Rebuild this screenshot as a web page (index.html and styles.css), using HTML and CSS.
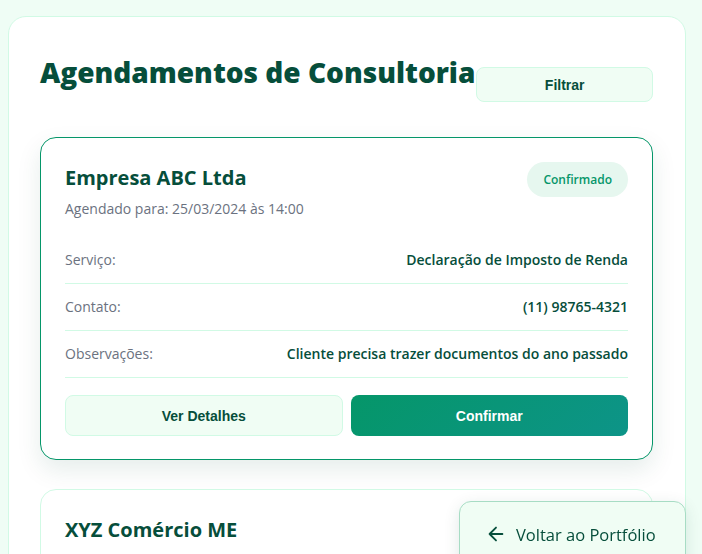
FILE: index.html
```html
<!DOCTYPE html>
<html lang="pt-BR">
<head>
<meta charset="utf-8">
<title>Agendamentos de Consultoria</title>
<link rel="stylesheet" href="styles.css">
</head>
<body>
<main class="panel">
  <header class="panel-head">
    <h1 class="panel-title">Agendamentos de Consultoria</h1>
    <button class="btn-filter">Filtrar</button>
  </header>

  <section class="appt appt--active">
    <div class="appt-top">
      <div>
        <h2 class="appt-name">Empresa ABC Ltda</h2>
        <p class="appt-date">Agendado para: 25/03/2024 às 14:00</p>
      </div>
      <span class="badge">Confirmado</span>
    </div>
    <div class="rows">
      <div class="row"><span class="row-label">Serviço:</span><span class="row-value">Declaração de Imposto de Renda</span></div>
      <div class="row"><span class="row-label">Contato:</span><span class="row-value">(11) 98765-4321</span></div>
      <div class="row"><span class="row-label">Observações:</span><span class="row-value">Cliente precisa trazer documentos do ano passado</span></div>
    </div>
    <div class="actions">
      <button class="btn btn-light">Ver Detalhes</button>
      <button class="btn btn-primary">Confirmar</button>
    </div>
  </section>

  <section class="appt">
    <div class="appt-top">
      <div>
        <h2 class="appt-name">XYZ Comércio ME</h2>
        <p class="appt-date">Agendado para: 26/03/2024 às 10:00</p>
      </div>
    </div>
  </section>
</main>

<a class="back-btn" href="#">
  <svg class="back-icon" viewBox="0 0 24 24" width="22" height="22" aria-hidden="true"><path d="M19 12H5M12 19l-7-7 7-7" fill="none" stroke="currentColor" stroke-width="2" stroke-linecap="round" stroke-linejoin="round"/></svg>
  <span>Voltar ao Portfólio</span>
</a>
</body>
</html>
```
FILE: styles.css
```css
* { box-sizing: border-box; }
html, body { margin: 0; }
body {
  background: #effdf5;
  font-family: "Open Sans", "Noto Sans", sans-serif;
  color: #064e3b;
  padding: 16px 16px 0 8px;
  overflow: hidden;
  height: 554px;
}
.panel {
  width: 678px;
  background: #fff;
  border: 1px solid #d1fae5;
  border-radius: 18px;
  padding: 32px 32px 0 31px;
  min-height: 700px;
}
.panel-head {
  display: flex;
  align-items: flex-start;
  margin-bottom: 35px;
  padding-top: 7px;
}
.panel-title {
  margin: 0;
  font-size: 28px;
  font-weight: 800;
  color: #064e3b;
  line-height: 1.2;
  white-space: nowrap;
}
.btn-filter {
  margin-left: 1px;
  margin-top: 11px;
  flex: 1;
  height: 35px;
  background: #f0fdf4;
  border: 1px solid #d1fae5;
  border-radius: 8px;
  font-family: "Liberation Sans", Arial, sans-serif;
  font-weight: 700;
  font-size: 14px;
  color: #064e3b;
}
.appt {
  border: 1px solid #d1fae5;
  border-radius: 16px;
  padding: 24px 24px 23px;
  margin-bottom: 29px;
  background: #fff;
}
.appt--active {
  border-color: #059669;
  box-shadow: 0 10px 25px rgba(6, 78, 59, 0.10);
}
.appt-top {
  display: flex;
  justify-content: space-between;
  align-items: flex-start;
  margin-bottom: 18px;
}
.appt-name {
  margin: 0 0 6px;
  padding-top: 1px;
  font-size: 20px;
  font-weight: 700;
  color: #064e3b;
  line-height: 30px;
}
.appt-date {
  margin: 0;
  font-size: 14px;
  color: #6b7280;
  line-height: 20px;
}
.badge {
  background: #e6f7ef;
  color: #059669;
  font-size: 12px;
  font-weight: 600;
  padding: 8px 16px;
  border-radius: 999px;
  line-height: 19px;
}
.rows { display: flex; flex-direction: column; }
.row {
  display: flex;
  justify-content: space-between;
  align-items: center;
  padding: 12px 0;
  line-height: 22px;
  border-bottom: 1px solid #d1fae5;
  font-size: 14px;
}
.row-label { color: #6b7280; }
.row-value { font-weight: 600; color: #064e3b; }
.actions {
  display: grid;
  grid-template-columns: 1fr 1fr;
  gap: 8px;
  margin-top: 17px;
}
.btn {
  height: 41px;
  border-radius: 8px;
  font-family: "Liberation Sans", Arial, sans-serif;
  font-weight: 700;
  font-size: 14px;
}
.btn-light {
  background: #f0fdf4;
  border: 1px solid #d1fae5;
  color: #064e3b;
}
.btn-primary {
  background: linear-gradient(135deg, #059669, #0d9488);
  border: none;
  color: #fff;
}
.back-btn {
  position: fixed;
  left: 459px;
  top: 501px;
  width: 227px;
  height: 80px;
  display: flex;
  align-items: flex-start;
  gap: 9px;
  padding: 21px 0 0 25px;
  background: #f0fdf4;
  border: 1px solid #a7dcc4;
  border-radius: 12px;
  box-shadow: 0 4px 16px rgba(6, 78, 59, 0.12);
  color: #064e3b;
  text-decoration: none;
  font-size: 16.5px;
  font-weight: 500;
}
.back-icon { margin-top: 0; flex: none; }
```
